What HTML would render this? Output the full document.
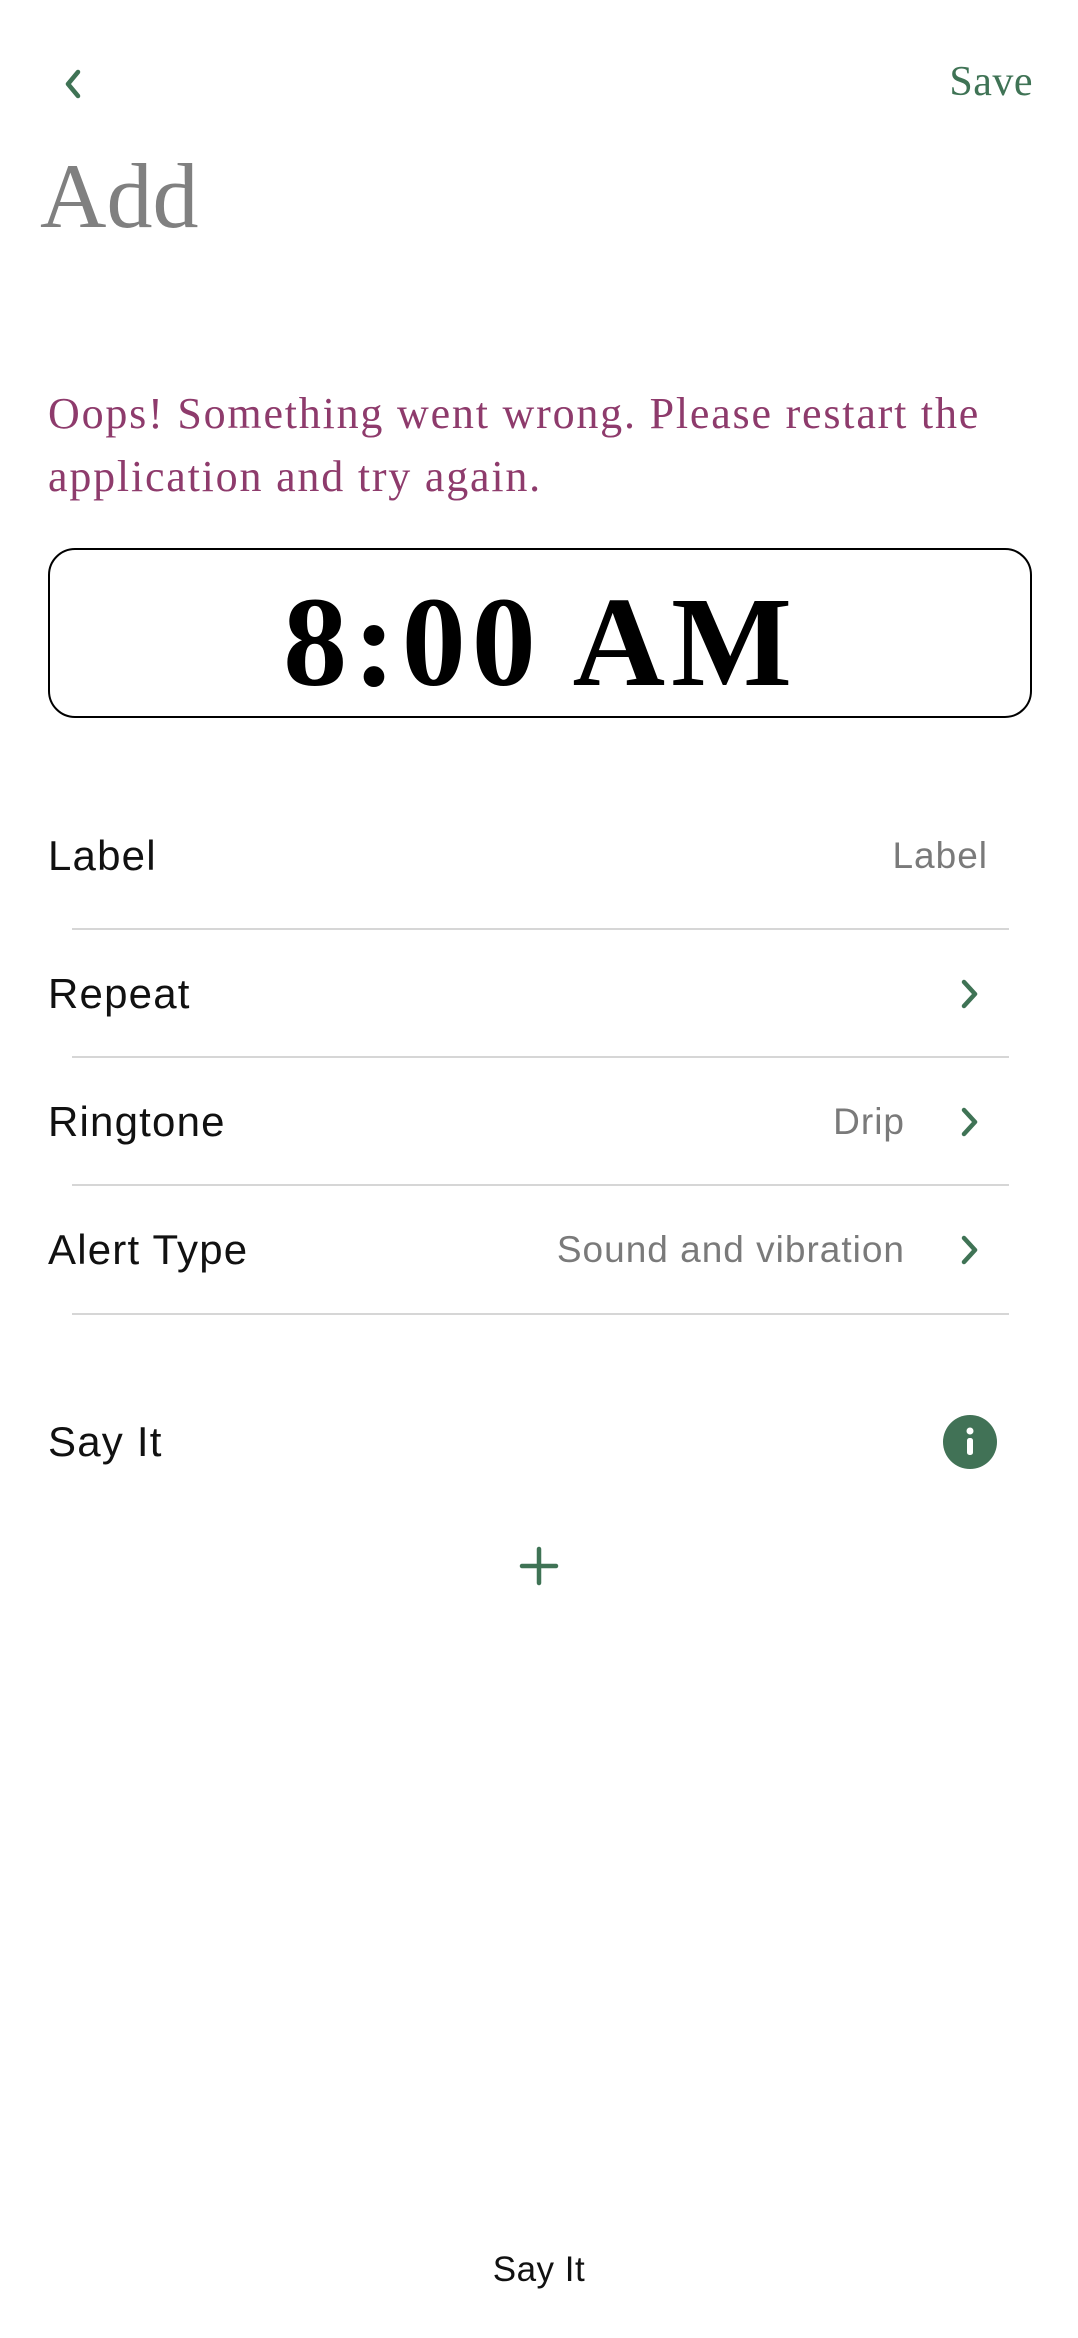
<!DOCTYPE html>
<html><head><meta charset="utf-8"><style>
body{margin:0;width:1078px;height:2338px;background:#fff;position:relative;overflow:hidden;font-family:"Liberation Sans",sans-serif}
.a{position:absolute;white-space:nowrap}
.serif{font-family:"Liberation Serif",serif}
.row{position:absolute;left:48px;font-size:42px;letter-spacing:1.2px;color:#111;transform:translateY(-50%)}
.val{position:absolute;font-size:37px;letter-spacing:1px;color:#7a7a7a;transform:translateY(-50%);text-align:right}
.div{position:absolute;left:72px;width:937px;height:2px;background:#d6d6d6}
.chev{position:absolute;left:958px;width:24px;height:36px}
</style></head><body>
<svg class="a" style="left:60px;top:66px" width="26" height="36" viewBox="0 0 26 36"><path d="M18 6 L8 18 L18 30" fill="none" stroke="#3f7355" stroke-width="4.5" stroke-linecap="round" stroke-linejoin="round"/></svg>
<div class="a serif" style="right:45px;top:58px;font-size:42px;letter-spacing:0.5px;color:#3f7355">Save</div>
<div class="a serif" style="left:40px;top:150px;font-size:92px;color:#808080;line-height:1">Add</div>
<div class="a serif" style="left:48px;top:382px;font-size:44px;letter-spacing:1.8px;line-height:63px;color:#8e3b6c">Oops! Something went wrong. Please restart the<br>application and try again.</div>
<div class="a" style="left:48px;top:548px;width:980px;height:166px;border:2.5px solid #000;border-radius:27px"></div>
<div class="a serif" style="left:48px;width:985px;text-align:center;top:578px;font-size:128px;letter-spacing:6px;line-height:1;font-weight:bold;color:#000">8:00 AM</div>

<div class="row" style="top:856px">Label</div><div class="val" style="right:90px;top:856px">Label</div>
<div class="div" style="top:928px"></div>
<div class="row" style="top:994px">Repeat</div>
<svg class="chev" style="top:976px" viewBox="0 0 24 36"><path d="M6 6 L17 18 L6 30" fill="none" stroke="#3f7355" stroke-width="4.5" stroke-linecap="round" stroke-linejoin="round"/></svg>
<div class="div" style="top:1056px"></div>
<div class="row" style="top:1122px">Ringtone</div><div class="val" style="right:173px;top:1122px">Drip</div>
<svg class="chev" style="top:1104px" viewBox="0 0 24 36"><path d="M6 6 L17 18 L6 30" fill="none" stroke="#3f7355" stroke-width="4.5" stroke-linecap="round" stroke-linejoin="round"/></svg>
<div class="div" style="top:1184px"></div>
<div class="row" style="top:1250px">Alert Type</div><div class="val" style="right:173px;top:1250px">Sound and vibration</div>
<svg class="chev" style="top:1232px" viewBox="0 0 24 36"><path d="M6 6 L17 18 L6 30" fill="none" stroke="#3f7355" stroke-width="4.5" stroke-linecap="round" stroke-linejoin="round"/></svg>
<div class="div" style="top:1313px"></div>
<div class="row" style="top:1442px">Say It</div>
<svg class="a" style="left:942px;top:1414px" width="56" height="56" viewBox="0 0 56 56"><circle cx="28" cy="28" r="27" fill="#417256"/><circle cx="28" cy="17" r="3.5" fill="#fff"/><rect x="25" y="24" width="6" height="17" rx="2.5" fill="#fff"/></svg>
<svg class="a" style="left:519px;top:1546px" width="40" height="40" viewBox="0 0 40 40"><path d="M20 3 V37 M3 20 H37" stroke="#3f7355" stroke-width="4.5" stroke-linecap="round"/></svg>
<div class="a" style="left:0;width:1078px;text-align:center;top:2250px;font-size:35px;letter-spacing:0.5px;color:#111">Say It</div>
</body></html>
